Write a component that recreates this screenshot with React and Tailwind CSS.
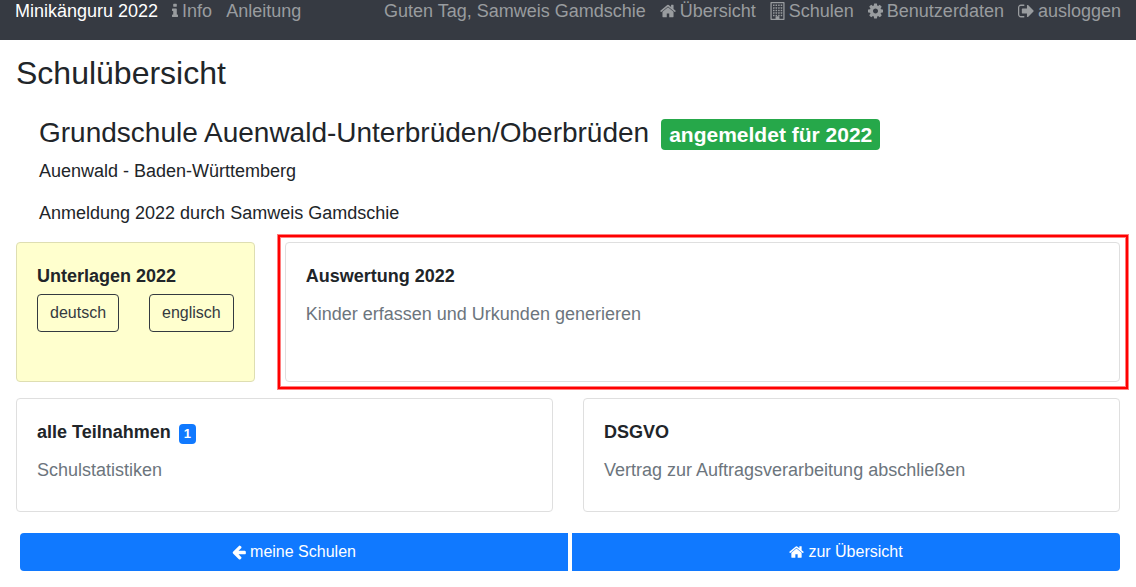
import React from 'react';

const HOME =
  'M1472 992v480q0 26-19 45t-45 19h-384v-384h-256v384h-384q-26 0-45-19t-19-45v-480q0-1 .5-3t.5-3l575-474 575 474q1 2 1 6zm223-69l-62 74q-8 9-21 11h-3q-13 0-21-7l-692-577-692 577q-12 8-24 7-13-2-21-11l-62-74q-8-10-7-23.5t11-21.5l719-599q32-26 76-26t76 26l244 204v-195q0-14 9-23t23-9h192q14 0 23 9t9 23v408l219 182q10 8 11 21.5t-7 23.5z';
const COG =
  'M1152 896q0-106-75-181t-181-75-181 75-75 181 75 181 181 75 181-75 75-181zm512-109v222q0 12-8 23t-20 13l-185 28q-19 54-39 91 35 50 107 138 10 12 10 25t-9 23q-27 37-99 108t-94 71q-12 0-26-9l-138-108q-44 23-91 38-16 136-29 186-7 28-36 28h-222q-14 0-24.5-8.5t-11.5-21.5l-28-184q-49-16-90-37l-141 107q-10 9-25 9-14 0-25-11-126-114-165-168-7-10-7-23 0-12 8-23 15-21 51-66.5t54-70.5q-27-50-41-99l-183-27q-13-2-21-12.5t-8-23.5v-222q0-12 8-23t19-13l186-28q14-46 39-92-40-57-107-138-10-12-10-24 0-10 9-23 26-36 98.5-107.5t94.5-71.5q13 0 26 10l138 107q44-23 91-38 16-136 29-186 7-28 36-28h222q14 0 24.5 8.5t11.5 21.5l28 184q49 16 90 37l142-107q9-9 24-9 13 0 25 10 129 119 165 170 7 8 7 22 0 12-8 23-15 21-51 66.5t-54 70.5q26 50 41 98l183 28q13 2 21 12.5t8 23.5z';
const SIGN_OUT =
  'M704 1440q0 4 1 20t.5 26.5-3 23.5-10 19.5-20.5 6.5h-320q-119 0-203.5-84.5t-84.5-203.5v-704q0-119 84.5-203.5t203.5-84.5h320q13 0 22.5 9.5t9.5 22.5q0 4 1 20t.5 26.5-3 23.5-10 19.5-20.5 6.5h-320q-66 0-113 47t-47 113v704q0 66 47 113t113 47h312l11.5 1 11.5 3 8 5.5 7 9 2 13.5zm928-544q0 26-19 45l-544 544q-19 19-45 19t-45-19-19-45v-288h-448q-26 0-45-19t-19-45v-384q0-26 19-45t45-19h448v-288q0-26 19-45t45-19 45 19l544 544q19 19 19 45z';
const ARROW_LEFT =
  'M1664 896v128q0 53-32.5 90.5t-84.5 37.5h-704l293 294q38 36 38 90t-38 90l-75 76q-37 37-90 37-52 0-91-37l-651-652q-37-37-37-90 0-52 37-91l651-650q38-38 91-38 52 0 90 38l75 74q38 38 38 91t-38 91l-293 293h704q52 0 84.5 37.5t32.5 90.5z';
const INFO =
  'M1216 1344v128q0 26-19 45t-45 19h-512q-26 0-45-19t-19-45v-128q0-26 19-45t45-19h64v-384h-64q-26 0-45-19t-19-45v-128q0-26 19-45t45-19h384q26 0 45 19t19 45v576h64q26 0 45 19t19 45zm-128-1152v192q0 26-19 45t-45 19h-256q-26 0-45-19t-19-45v-192q0-26 19-45t45-19h256q26 0 45 19t19 45z';

function Icon({ path, viewBox, className }) {
  return (
    <svg viewBox={viewBox} className={'shrink-0 fill-current ' + className} aria-hidden="true">
      <path d={path} />
    </svg>
  );
}

function BuildingIcon() {
  const windows = [];
  for (const y of [256, 512, 768, 1024, 1280]) {
    for (const x of [256, 512, 768, 1024]) {
      windows.push(<rect key={x + '-' + y} x={x} y={y} width="150" height="150" rx="24" />);
    }
  }
  return (
    <svg viewBox="0 0 1408 1792" className="h-[18px] w-[15px] shrink-0 fill-current" aria-hidden="true">
      <path fillRule="evenodd" d="M64 0h1280q64 0 64 64v1664q0 64-64 64h-1280q-64 0-64-64v-1664q0-64 64-64zM128 128v1536h384v-224q0-32 32-32h320q32 0 32 32v224h384v-1536z" />
      {windows}
    </svg>
  );
}

function NavLink({ children }) {
  return (
    <a href="#" className="flex items-center gap-1 whitespace-nowrap text-[#999c9f]">
      {children}
    </a>
  );
}

function Card({ title, text, children, className }) {
  return (
    <a href="#" className={'relative block rounded border border-[#dfdfdf] bg-white p-5 ' + className}>
      <h3 className="flex items-center gap-2 font-bold leading-[26px]">{title}</h3>
      <p className="mt-3 leading-[26px] text-[#6c757d]">{text}</p>
      {children}
    </a>
  );
}

const outlineButton =
  'h-[38px] rounded border border-[#343a40] px-3 text-base text-[#343a40]';
const primaryButton =
  'flex h-[38px] flex-1 items-center justify-center gap-1 bg-[#1079ff] text-base text-white';

export default function App() {
  return (
    <div className="font-['Liberation_Sans',Arial,sans-serif] text-[18px] text-[#212529]">
      <nav className="flex justify-between bg-[#363a42] px-[15px] pb-[18px] leading-[22px]">
        <div className="flex gap-[14px]">
          <a href="#" className="whitespace-nowrap text-white">Minikänguru 2022</a>
          <NavLink>
            <Icon path={INFO} viewBox="576 0 640 1792" className="h-[18px] w-[6px]" />
            Info
          </NavLink>
          <NavLink>Anleitung</NavLink>
        </div>
        <div className="flex gap-[14px]">
          <span className="whitespace-nowrap text-[#999c9f]">Guten Tag, Samweis Gamdschie</span>
          <NavLink>
            <Icon path={HOME} viewBox="64 0 1664 1792" className="h-[18px] w-4" />
            Übersicht
          </NavLink>
          <NavLink>
            <BuildingIcon />
            Schulen
          </NavLink>
          <NavLink>
            <Icon path={COG} viewBox="128 0 1536 1792" className="h-[18px] w-[15px]" />
            Benutzerdaten
          </NavLink>
          <NavLink>
            <Icon path={SIGN_OUT} viewBox="64 0 1600 1792" className="h-[18px] w-4" />
            ausloggen
          </NavLink>
        </div>
      </nav>

      <main className="px-4 pb-4 pt-[14px]">
        <h1 className="text-[32px] leading-[38px]">Schulübersicht</h1>
        <header className="mt-[23px] pl-[23px]">
          <h2 className="flex items-center gap-3 text-[28px] leading-[34px]">
            Grundschule Auenwald-Unterbrüden/Oberbrüden
            <span className="mt-1 h-[31px] rounded bg-[#26a84a] px-2 text-[21px] font-bold leading-[31px] text-white">
              angemeldet für 2022
            </span>
          </h2>
          <p className="mt-2 leading-[26px]">Auenwald - Baden-Württemberg</p>
          <p className="mt-4 leading-[26px]">Anmeldung 2022 durch Samweis Gamdschie</p>
        </header>

        <div className="mt-4 flex gap-[30px]">
          <section className="min-h-[140px] rounded border border-[#dedeb2] bg-[#ffffce] p-5">
            <h3 className="font-bold leading-[26px]">Unterlagen 2022</h3>
            <div className="mt-[5px] flex gap-[30px]">
              <button type="button" className={outlineButton}>deutsch</button>
              <button type="button" className={outlineButton}>englisch</button>
            </div>
          </section>
          <Card title="Auswertung 2022" text="Kinder erfassen und Urkunden generieren" className="min-h-[140px] flex-1">
            <span className="pointer-events-none absolute -bottom-2 -left-2 -right-[9px] -top-2 border-2 border-[#ff0000] shadow-[0_0_0_1px_#ff7f7f,inset_0_0_0_1px_#ff7f7f]" />
          </Card>
        </div>

        <div className="mt-4 grid grid-cols-2 gap-[30px]">
          <Card
            title={
              <>
                alle Teilnahmen
                <span className="mt-1 h-5 rounded bg-[#1079ff] px-[5px] text-[13px] leading-5 text-white">1</span>
              </>
            }
            text="Schulstatistiken"
            className="min-h-[114px]"
          />
          <Card title="DSGVO" text="Vertrag zur Auftragsverarbeitung abschließen" className="min-h-[114px]" />
        </div>

        <div className="mt-[21px] flex gap-1 pl-1">
          <button type="button" className={primaryButton + ' rounded-l'}>
            <Icon path={ARROW_LEFT} viewBox="128 0 1536 1792" className="h-4 w-[14px]" />
            meine Schulen
          </button>
          <button type="button" className={primaryButton + ' rounded-r'}>
            <Icon path={HOME} viewBox="64 0 1664 1792" className="h-4 w-[15px]" />
            zur Übersicht
          </button>
        </div>
      </main>
    </div>
  );
}
